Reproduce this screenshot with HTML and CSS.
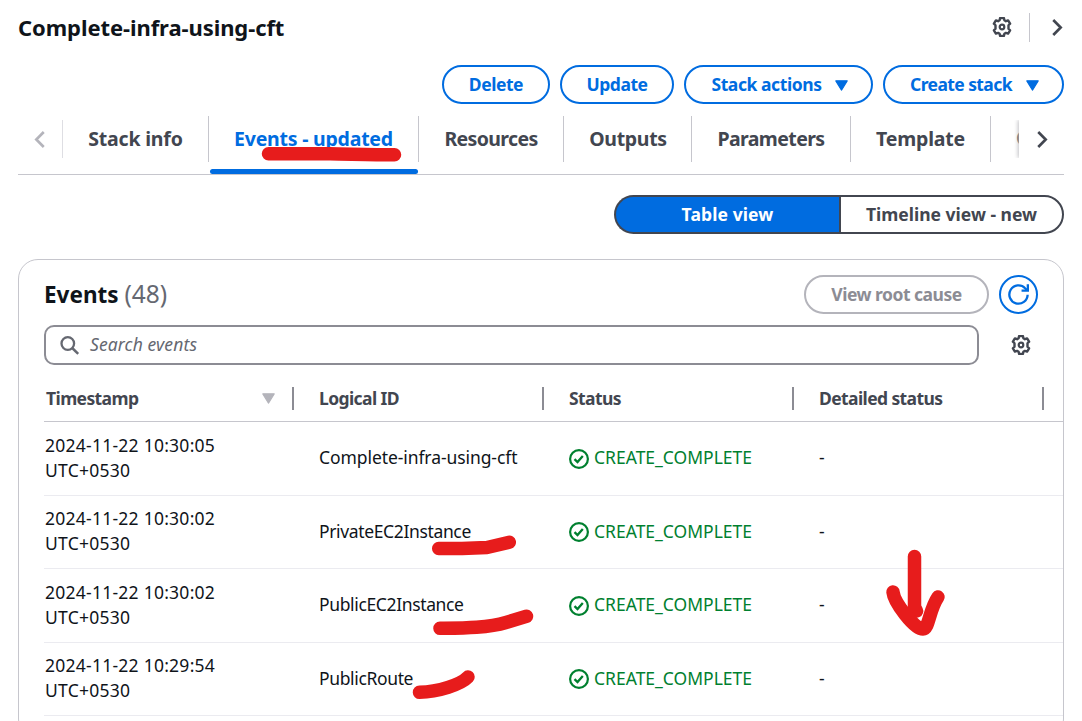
FILE: index.html
```html
<!DOCTYPE html>
<html lang="en">
<head>
<meta charset="utf-8">
<title>Complete-infra-using-cft</title>
<link rel="stylesheet" href="styles.css">
</head>
<body>
<svg class="defs" width="0" height="0">
  <symbol id="gear" viewBox="0 0 20 20"><path d="M8.1 1.1h3.8l.5 2.2 1.5.9 2.2-.8 2 3.2-1.6 1.7v3.400l1.600 1.700-2 3.200-2.200-.7-1.500.9-.5 2.100H8.100l-.5-2.100-1.500-.9-2.200.7-2-3.200 1.600-1.700V8.300L1.900 6.600l2-3.200 2.200.8 1.500-.9z" fill="none" stroke="currentColor" stroke-width="2.400" stroke-linejoin="round"/><circle cx="10" cy="10" r="2.300" fill="none" stroke="currentColor" stroke-width="2.200"/></symbol>
  <symbol id="caret" viewBox="0 0 12 10"><path d="M.7.7h10.600L6 9.300z" fill="currentColor" stroke="currentColor" stroke-linejoin="round"/></symbol>
  <symbol id="right" viewBox="0 0 10 16"><path d="M1 1l7 7-7 7" fill="none" stroke="currentColor" stroke-width="2.500"/></symbol>
  <symbol id="check" viewBox="0 0 20 20"><circle cx="10" cy="10" r="8.900" fill="none" stroke="currentColor" stroke-width="2.200"/><path d="M5.500 10.200l3 2.900 5.300-6" fill="none" stroke="currentColor" stroke-width="2.300"/></symbol>
</svg>
<header class="head">
  <h1 class="title">Complete-infra-using-cft</h1>
  <div class="head-tools">
    <svg class="gear"><use href="#gear"/></svg>
    <span class="head-sep"></span>
    <svg class="chev"><use href="#right"/></svg>
  </div>
</header>
<div class="actions">
  <button class="btn btn-delete"><span>Delete</span></button>
  <button class="btn btn-update"><span>Update</span></button>
  <button class="btn btn-stack"><span>Stack actions</span><svg class="caret"><use href="#caret"/></svg></button>
  <button class="btn btn-create"><span>Create stack</span><svg class="caret"><use href="#caret"/></svg></button>
</div>
<nav class="tabs">
  <div class="scroll-left"><svg class="chev flip"><use href="#right"/></svg></div>
  <div class="tab tab-info"><span>Stack info</span></div>
  <div class="tab tab-events active"><span>Events - updated</span></div>
  <div class="tab tab-resources"><span>Resources</span></div>
  <div class="tab tab-outputs"><span>Outputs</span></div>
  <div class="tab tab-params"><span>Parameters</span></div>
  <div class="tab tab-template"><span>Template</span></div>
  <div class="tab-cut"><span>C</span></div>
  <div class="scroll-right"><svg class="chev"><use href="#right"/></svg></div>
</nav>
<div class="views">
  <div class="seg seg-table"><span>Table view</span></div>
  <div class="seg seg-time"><span>Timeline view - new</span></div>
</div>
<section class="panel">
  <div class="panel-head">
    <h2 class="events">Events <span class="count">(48)</span></h2>
    <button class="btn btn-root"><span>View root cause</span></button>
    <button class="btn btn-refresh"><svg class="refresh" viewBox="0 0 20 20"><path d="M18.700 10.200A8.700 8.700 0 1 1 16.300 4l2 2" fill="none" stroke="currentColor" stroke-width="2.200"/><path d="M18.900.3v6h-6" fill="none" stroke="currentColor" stroke-width="2.200"/></svg></button>
  </div>
  <div class="search-row">
    <div class="search">
      <svg class="lens" viewBox="0 0 20 20"><circle cx="7.800" cy="7.500" r="6.300" fill="none" stroke="currentColor" stroke-width="2.300"/><path d="M12.200 12l6 5.800" stroke="currentColor" stroke-width="2.500"/></svg>
      <span class="placeholder">Search events</span>
    </div>
    <svg class="gear"><use href="#gear"/></svg>
  </div>
  <div class="table">
    <div class="row thead">
      <div class="cell th"><span>Timestamp</span><svg class="sort"><use href="#caret"/></svg></div>
      <div class="cell th"><span>Logical ID</span></div>
      <div class="cell th"><span>Status</span></div>
      <div class="cell th"><span>Detailed status</span></div>
    </div>
    <div class="row r1"><div class="cell time"><span>2024-11-22 10:30:05</span><span>UTC+0530</span></div><div class="cell id-full">Complete-infra-using-cft</div><div class="cell status"><svg class="check"><use href="#check"/></svg><span>CREATE_COMPLETE</span></div><div class="cell">-</div></div>
    <div class="row r2"><div class="cell time"><span>2024-11-22 10:30:02</span><span>UTC+0530</span></div><div class="cell id">PrivateEC2Instance</div><div class="cell status"><svg class="check"><use href="#check"/></svg><span>CREATE_COMPLETE</span></div><div class="cell">-</div></div>
    <div class="row r3"><div class="cell time"><span>2024-11-22 10:30:02</span><span>UTC+0530</span></div><div class="cell id">PublicEC2Instance</div><div class="cell status"><svg class="check"><use href="#check"/></svg><span>CREATE_COMPLETE</span></div><div class="cell">-</div></div>
    <div class="row r4"><div class="cell time"><span>2024-11-22 10:29:54</span><span>UTC+0530</span></div><div class="cell id">PublicRoute</div><div class="cell status"><svg class="check"><use href="#check"/></svg><span>CREATE_COMPLETE</span></div><div class="cell">-</div></div>
  </div>
</section>
<svg class="marks" viewBox="0 0 1082 721">
  <path d="M268.500 153.700H330C350 154 372 154.800 394.500 154.800"/>
  <path d="M438.700 548.500H462L487 547.500 509.300 542.300"/>
  <path d="M440 628.300C462 628 488 628 506 622.500L526.500 616.300"/>
  <path d="M419.500 692.300C438 692 461 684.500 468 677"/>
  <path d="M914.500 556.500V607L916.500 611"/>
  <path d="M893 592C894 602 914 629 923 629C929 629 929 610 938 597"/>
</svg>
</body>
</html>
```
FILE: styles.css
```css
* { box-sizing: border-box; }
body {
  margin: 0;
  width: 1082px;
  height: 721px;
  overflow: hidden;
  position: relative;
  padding: 0 18px;
  background: #fff;
  color: #0f141a;
  font: 17.5px/25px "Noto Sans", "Open Sans", sans-serif;
  white-space: nowrap;
}
h1, h2 { margin: 0; }
svg { flex: none; display: block; }
.defs { position: absolute; }

.head { height: 65px; padding-top: 12px; display: flex; justify-content: space-between; align-items: flex-start; }
.title { font-size: 22px; line-height: 30px; font-weight: 700; letter-spacing: -.08px; }
.head-tools { height: 30px; display: flex; align-items: center; color: #424650; padding-right: 1px; }
.gear { width: 20px; height: 20px; }
.head-sep { width: 1px; height: 29px; background: #c6c6cd; margin: 0 22px 0 17px; }
.chev { width: 11px; height: 17px; }
.flip { transform: scaleX(-1); }

.actions { height: 50px; display: flex; gap: 10px; justify-content: flex-end; align-items: flex-start; }
.btn {
  height: 39px;
  padding: 0 0 1px;
  border: 2px solid #006ce0;
  border-radius: 20px;
  background: #fff;
  color: #006ce0;
  font: 700 17.5px/25px "Noto Sans", sans-serif;
  letter-spacing: -.45px;
  display: flex;
  flex: none;
  align-items: center;
  justify-content: center;
}
.btn-delete { width: 108px; }
.btn-update { width: 114px; }
.btn-stack { width: 189px; gap: 13px; padding-left: 2px; letter-spacing: -.42px; }
.btn-create { width: 181px; gap: 14px; padding-left: 2px; letter-spacing: -.6px; }
.caret { width: 13px; height: 11px; margin-top: 2px; }

.tabs { height: 60px; border-bottom: 1px solid #c6c6cd; display: flex; align-items: flex-start; padding-top: 1px; font-size: 19.5px; font-weight: 700; color: #424650; }
.scroll-left { width: 45px; height: 38px; margin-top: 4px; border-right: 1px solid #dedee3; padding: 11px 0 0 16px; color: #b4b4bb; }
.tab { height: 46px; padding-bottom: 2px; border-right: 1px solid #c6c6cd; display: flex; align-items: center; justify-content: center; flex: none; }
.tab-info { width: 146px; letter-spacing: -.2px; }
.tab-events { width: 210px; letter-spacing: -.23px; }
.tab-resources { width: 145px; letter-spacing: -.65px; }
.tab-outputs { width: 128px; padding-left: 1px; letter-spacing: -.3px; }
.tab-params { width: 159px; letter-spacing: -.6px; }
.tab-template { width: 140px; letter-spacing: -.2px; }
.tab.active { color: #006ce0; position: relative; }
.active::after { content: ""; position: absolute; left: 1px; right: 0; top: 53px; height: 5px; border-radius: 3px; background: #006ce0; }
.tab-cut { width: 28px; height: 46px; overflow: hidden; padding: 9px 0 0 25px; }
.scroll-right { width: 45px; height: 38px; margin-top: 4px; box-shadow: -1px 0 4px #c0c0c4; clip-path: inset(0 0 0 -6px); background: #fff; padding: 11px 0 0 18px; }

.views { height: 84px; padding-top: 20px; display: flex; justify-content: flex-end; font-weight: 700; align-items: flex-start; }
.seg { height: 39px; padding-bottom: 1px; border: 2px solid #424650; display: flex; align-items: center; justify-content: center; }
.seg-table { width: 225px; background: #006ce0; color: #fff; border-right: 0; border-radius: 20px 0 0 20px; letter-spacing: .1px; }
.seg-time { width: 225px; color: #424650; border-radius: 0 20px 20px 0; }

.panel { height: 480px; border: 1px solid #c6c6cd; border-radius: 20px; padding: 15px 0 0 25px; }
.panel-head { display: flex; height: 50px; padding-right: 25px; align-items: flex-start; }
.events { font-size: 22.5px; line-height: 38px; font-weight: 700; flex: 1; }
.count { font-weight: 400; font-size: 24.5px; color: #656871; }
.btn-root { width: 185px; margin-right: 10px; color: #8c8c94; border-color: #b4b4bb; letter-spacing: -.5px; }
.btn-refresh { width: 39px; padding-bottom: 0; }
.refresh { width: 21px; height: 21px; }
.search-row { display: flex; height: 40px; align-items: center; gap: 32px; color: #424650; }
.search { width: 935px; height: 40px; border: 2px solid #8c8c94; border-radius: 10px; display: flex; align-items: center; padding-left: 14px; gap: 10px; color: #656871; }
.lens { width: 20px; height: 20px; margin-top: 1px; }
.placeholder { font-style: italic; letter-spacing: .12px; padding-bottom: 1px; }

.row { display: grid; grid-template-columns: 275px 250px 250px 1fr; align-items: center; height: 73px; padding-bottom: 2px; border-bottom: 1px solid #ebebf0; }
.r1, .r3 { height: 74px; }
.thead { height: 57px; padding-bottom: 0; border-color: #c6c6cd; color: #424650; font-weight: 700; letter-spacing: -.6px; }
.time { display: flex; flex-direction: column; letter-spacing: .25px; padding-left: 1px; }
.th { height: 23px; margin-top: 11px; margin-right: 25px; border-right: 2px solid #8c8c94; display: flex; align-items: center; justify-content: space-between; }
.th span { padding-bottom: 1px; }
.th:first-child { padding-left: 2px; padding-right: 17px; }
.th:last-child { margin-right: 19px; }
.id-full { letter-spacing: -.08px; }
.id { letter-spacing: -.36px; }
.sort { width: 13px; height: 11px; color: #b4b4bb; }
.status { display: flex; align-items: center; gap: 5px; color: #00802f; }
.check { width: 20px; height: 20px; margin-top: 2px; }
.marks { position: absolute; left: 0; top: 0; width: 1082px; height: 721px; fill: none; stroke: #e71c1c; stroke-width: 13.5px; stroke-linecap: round; stroke-linejoin: round; pointer-events: none; }
```
